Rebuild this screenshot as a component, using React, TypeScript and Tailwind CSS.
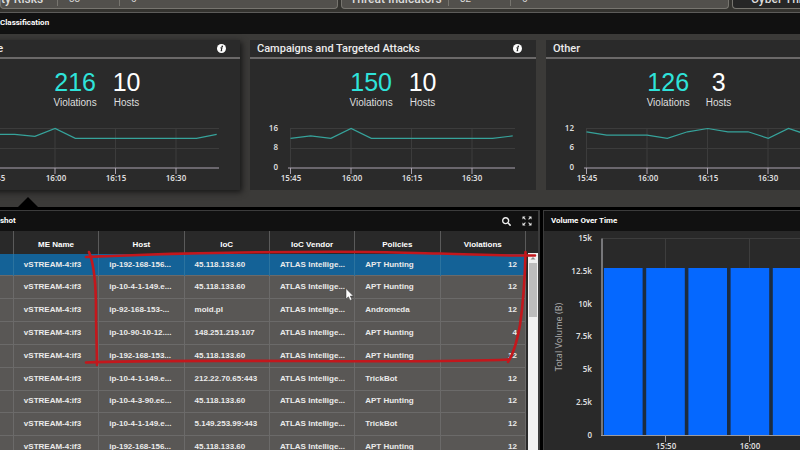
import clsx from "clsx";
import { FaSearch } from "react-icons/fa";
import { MdZoomOutMap } from "react-icons/md";

const cards = [
    { title: "Malware", violations: 216, hosts: 10, max: 40, active: true, data: [34, 34, 32, 40, 30, 30, 30, 30, 30, 30, 30, 34] },
    { title: "Campaigns and Targeted Attacks", violations: 150, hosts: 10, max: 16, active: false, data: [12, 13, 12, 16, 12, 12, 12, 12, 12, 12, 12, 13] },
    { title: "Other", violations: 126, hosts: 3, max: 12, active: false, data: [11, 10, 10, 10, 9, 11, 12, 11, 11, 9, 12, 10] },
];

const columns = ["", "ME Name", "Host", "IoC", "IoC Vendor", "Policies", "Violations"];

const rows = [
    { host: "ip-192-168-156...", ioc: "45.118.133.60", policy: "APT Hunting", count: 12 },
    { host: "ip-10-4-1-149.e...", ioc: "45.118.133.60", policy: "APT Hunting", count: 12 },
    { host: "ip-92-168-153-...", ioc: "moid.pl", policy: "Andromeda", count: 12 },
    { host: "ip-10-90-10-12....", ioc: "148.251.219.107", policy: "APT Hunting", count: 4 },
    { host: "ip-192-168-153...", ioc: "45.118.133.60", policy: "APT Hunting", count: 12 },
    { host: "ip-10-4-1-149.e...", ioc: "212.22.70.65:443", policy: "TrickBot", count: 12 },
    { host: "ip-10-4-3-90.ec...", ioc: "45.118.133.60", policy: "APT Hunting", count: 12 },
    { host: "ip-10-4-1-149.e...", ioc: "5.149.253.99:443", policy: "TrickBot", count: 12 },
    { host: "ip-192-168-156...", ioc: "45.118.133.60", policy: "APT Hunting", count: 12 },
];

const volumeTicks = ["15k", "12.5k", "10k", "7.5k", "5k", "2.5k", "0"];

function InfoIcon() {
    return (
        <svg viewBox="0 0 18 18" className="size-[9px]" aria-hidden="true">
            <circle cx="9" cy="9" r="9" fill="#fff" />
            <circle cx="10.5" cy="4.5" r="1.7" fill="#222" />
            <path d="M7 7.8h2.9L8.4 13.6h2" fill="none" stroke="#222" strokeWidth="2.2" />
        </svg>
    );
}

function Sparkline({ data, max }: { data: number[]; max: number }) {
    const points = data.map((v, i) => `${40.5 + i * 20.2},${46 - (v / max) * 39.5}`).join(" ");

    return (
        <svg viewBox="0 0 286 66" className="block w-full font-['Noto_Sans',sans-serif] text-[8px] font-semibold">
            <path d="M40 6.5H265M40 26.5H265M40.5 6V46M101 6V46M161.5 6V46M222 6V46" stroke="#3c3c3c" fill="none" />
            <path d="M38 46H265M40.5 46v6M101 46v6M161.5 46v6M222 46v6" stroke="#aaa3b0" fill="none" />
            <polyline points={points} fill="none" stroke="#36a39b" strokeWidth="1.2" />
            <g fill="#dcdcdc" textAnchor="end">
                <text x="28" y="9">{max}</text>
                <text x="28" y="28">{max / 2}</text>
                <text x="28" y="48">0</text>
            </g>
            <g fill="#dcdcdc" textAnchor="middle">
                <text x="41" y="59">15:45</text>
                <text x="102" y="59">16:00</text>
                <text x="162" y="59">16:15</text>
                <text x="222" y="59">16:30</text>
            </g>
        </svg>
    );
}

function ThreatCard({ card }: { card: (typeof cards)[number] }) {
    return (
        <section className={clsx("h-[150px] bg-[#2a2a2a]", card.active && "shadow-[2px_2px_6px_#161616]")}>
            <header className="flex h-[19px] items-center justify-between border-b-2 border-[#6b6969] pr-[14px] pl-[7px]">
                <h3 className="font-[Roboto,sans-serif] text-[11px] leading-4 font-medium text-[#ececec]">{card.title}</h3>
                <button type="button" aria-label="Info">
                    <InfoIcon />
                </button>
            </header>
            <div className="flex h-[63px] justify-center gap-4 pt-2 text-center">
                <div>
                    <div className="text-[25px] leading-[30px] text-[#2fe3da]">{card.violations}</div>
                    <div className="text-[10px] leading-3 text-[#dedede]">Violations</div>
                </div>
                <div>
                    <div className="text-[25px] leading-[30px] text-white">{card.hosts}</div>
                    <div className="text-[10px] leading-3 text-[#dedede]">Hosts</div>
                </div>
            </div>
            <Sparkline data={card.data} max={card.max} />
        </section>
    );
}

function TopTabs() {
    const tab = "flex items-end rounded-b border border-t-0 border-[#77756f] bg-[#52504c]";

    return (
        <nav className="flex h-3 shrink-0 items-end gap-[3px] overflow-hidden bg-[#34332f] pb-[3px] leading-[14px] text-[#dcdcdc]">
            <div className={clsx(tab, "h-6 w-[338px] shrink-0 pb-[2px] text-[10px]")}>
                <span className="w-[57px] border-r border-[#77756f] font-[Roboto,sans-serif] text-[12px] font-medium">ty Risks</span>
                <span className="w-[62px] border-r border-[#77756f] pl-[11px]">55</span>
                <span className="pl-[11px]">6</span>
            </div>
            <div className={clsx(tab, "h-6 w-[388px] shrink-0 pb-[2px] text-[10px]")}>
                <span className="w-[107px] border-r border-[#77756f] pl-2 font-[Roboto,sans-serif] text-[12px] font-medium">Threat Indicators</span>
                <span className="w-[62px] border-r border-[#77756f] pl-[11px]">32</span>
                <span className="pl-[11px]">6</span>
            </div>
            <div className="flex h-6 grow items-end overflow-hidden rounded-bl border border-t-0 border-r-0 border-[#77756f] bg-[#262626] pb-[2px] pl-[18px]">
                <span className="font-[Roboto,sans-serif] text-[12px] font-medium whitespace-nowrap">Cyber Threats</span>
            </div>
        </nav>
    );
}

function ViolationsTable() {
    return (
        <div className="flex">
            <div className="min-w-0 grow bg-[#292929]">
                <div className="-ml-[72px]">
                    <table className="h-[228px] w-full table-fixed border-collapse text-[8px] leading-3 font-bold text-[#ebebeb]">
                        <thead>
                            <tr className="h-[23px]">
                                {columns.map((name, idx) => (
                                    <th key={idx} className="border-r border-[#5a5a5a] p-0 pt-1 text-white">{name}</th>
                                ))}
                            </tr>
                        </thead>
                        <tbody>
                            {rows.map((row, idx) => (
                                <tr
                                    key={idx}
                                    className={clsx("border-b border-[#6b6a69] [&>td]:border-r [&>td]:py-0 [&>td]:pr-0 [&>td]:pl-[10px]", idx === 0 ? "bg-[#146297] [&>td]:border-[#2b739f]" : "bg-[#595755] [&>td]:border-[#6b6a69]")}
                                >
                                    <td></td>
                                    <td>vSTREAM-4:if3</td>
                                    <td>{row.host}</td>
                                    <td>{row.ioc}</td>
                                    <td>ATLAS Intellige...</td>
                                    <td>{row.policy}</td>
                                    <td className="text-right"><span className="pr-2">{row.count}</span></td>
                                </tr>
                            ))}
                        </tbody>
                    </table>
                </div>
            </div>
            {/* Scrollbar */}
            <div className="flex w-3 flex-col bg-[#292929] pt-[22px] pl-[2px]">
                <div className="flex grow flex-col items-center bg-[#f1f1f1]">
                    <svg viewBox="0 0 10 10" className="size-[10px]" aria-hidden="true">
                        <path d="M2.5 6.5 5 4l2.5 2.5z" fill="#8b8b8b" />
                    </svg>
                    <div className="h-[54px] w-2 bg-[#bdbdbd]" />
                </div>
            </div>
        </div>
    );
}

function VolumeChart() {
    return (
        <svg viewBox="0 0 256 219" className="block w-full font-['Noto_Sans',sans-serif] text-[8px] font-semibold">
            <path d="M58 7.5H256M58 40H256M58 73H256M58 106H256M58 139H256M58 171.5H256M121.5 7V204M205.5 7V204" stroke="#3d3d3d" fill="none" />
            <rect x="59" y="37" width="197" height="167" fill="#1c2c40" />
            {[0, 1, 2, 3, 4].map((i) => (
                <rect key={i} x={60 + i * 42.2} y="37" width="38.6" height="167" fill="#0568ff" />
            ))}
            <path d="M58 7.5V205" stroke="#77777a" strokeWidth="2" />
            <path d="M57 204.5H256M121.5 205v6M205.5 205v6" stroke="#9b9ba0" fill="none" />
            <g fill="#dcdcdc" textAnchor="end">
                {volumeTicks.map((tick, i) => (
                    <text key={tick} x="48" y={10 + i * 32.8}>{tick}</text>
                ))}
            </g>
            <g fill="#dcdcdc" textAnchor="middle">
                <text x="122" y="218">15:50</text>
                <text x="206" y="218">16:00</text>
            </g>
            <text transform="translate(18 106) rotate(-90)" textAnchor="middle" fill="#a8a8a8" className="text-[9px] font-normal">
                Total Volume (B)
            </text>
        </svg>
    );
}

/* Hand-drawn box and mouse pointer lying over the table */
function Annotation() {
    return (
        <svg viewBox="0 0 800 450" className="pointer-events-none absolute top-0 left-0 w-full" aria-hidden="true">
            <g fill="none" stroke="#c3171c" strokeWidth="2.6" strokeLinecap="round">
                <path d="M86 257C150 254 230 252 300 252C370 251 400 253 440 253.500C480 254.500 500 256 535 255.500" />
                <path d="M89 252C94 264 96 285 96 310C96 330 97 350 97 365" />
                <path d="M86 362.500C140 360 230 361 300 361C380 361.500 460 362 509 359.500" />
                <path d="M525.500 252C525 275 523 305 520 325C517 342 514 353 508 362" />
            </g>
            <path d="M346 288.500v10.500l2.400-2.200 1.700 3.600 1.900-.9-1.700-3.400h3.100z" fill="#fff" stroke="#333" strokeWidth=".5" />
        </svg>
    );
}

export default function App() {
    const panelTitle = "font-[Roboto,sans-serif] text-[8px] leading-5 font-bold text-white";

    return (
        <div className="relative flex h-screen flex-col overflow-hidden bg-[#3b3a38] font-['Liberation_Sans',Arial,sans-serif]">
            <TopTabs />
            <h2 className={clsx(panelTitle, "h-[22px] shrink-0 border-t border-[#5d5c5a] bg-[#111]")}>Classification</h2>

            <div className="-mr-8 -ml-[46px] grid shrink-0 grid-cols-3 gap-[10px] pt-[6px]">
                {cards.map((card) => (
                    <ThreatCard key={card.title} card={card} />
                ))}
            </div>

            {/* Pointer from the active card to the snapshot */}
            <div className="flex h-[17px] shrink-0 items-end pl-[18px]">
                <svg viewBox="0 0 20 10" className="h-[10px] w-5" aria-hidden="true">
                    <path d="M0 10 10 0l10 10z" fill="#000" />
                </svg>
            </div>

            <main className="grid grow grid-cols-[540fr_257fr] gap-[3px] bg-black pt-[3px]">
                <section className="min-w-0 overflow-hidden border-t border-r-2 border-[#3c3c3c] bg-[#292929]">
                    <header className="flex h-5 items-center justify-between bg-[#111] pr-[5px]">
                        <h2 className={panelTitle}>shot</h2>
                        <div className="flex items-center gap-[10px] text-[#eee]">
                            <button type="button" aria-label="Search"><FaSearch size={9} /></button>
                            <button type="button" aria-label="Expand"><MdZoomOutMap size={12} /></button>
                        </div>
                    </header>
                    <ViolationsTable />
                </section>
                <section className="min-w-0 overflow-hidden border-t border-l border-[#3c3c3c] bg-[#292929]">
                    <header className="h-5 bg-[#111] pl-[7px]">
                        <h2 className={panelTitle}>Volume Over Time</h2>
                    </header>
                    <VolumeChart />
                </section>
            </main>

            <Annotation />
        </div>
    );
}
